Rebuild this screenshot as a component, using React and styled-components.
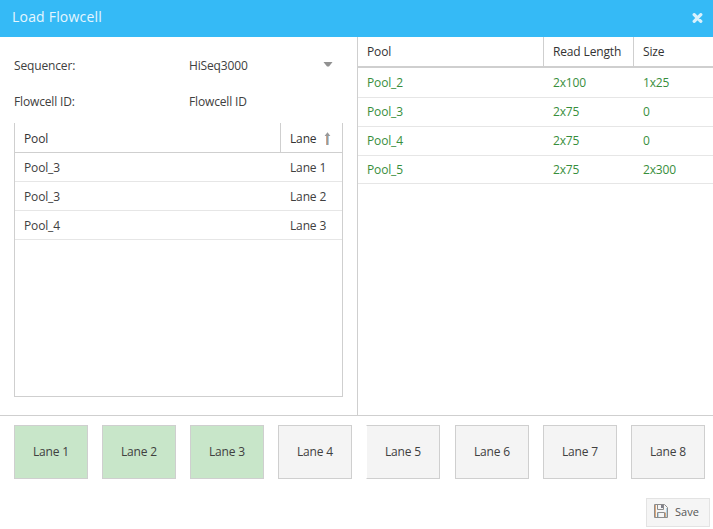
import React from 'react';
import styled, { createGlobalStyle } from 'styled-components';

const GlobalStyle = createGlobalStyle`
  * { box-sizing: border-box; }
  body { margin: 0; background: #fff; }
`;

const Window = styled.div`
  width: 713px;
  height: 529px;
  display: flex;
  flex-direction: column;
  overflow: hidden;
  background: #fff;
  color: #404040;
  font: 12px/18px "Open Sans", sans-serif;
  letter-spacing: -0.15px;
`;

const TitleBar = styled.header`
  flex: none;
  height: 37px;
  padding: 0 10px 3px 12px;
  display: flex;
  align-items: center;
  justify-content: space-between;
  background: #35baf6;
`;

const Title = styled.h1`
  margin: 0;
  color: #e5f6fe;
  font-size: 14px;
  font-weight: 400;
  letter-spacing: 0.2px;
`;

const CloseIcon = styled.svg`
  width: 11px;
  height: 10px;
  margin-top: 1px;
  display: block;
`;

const Body = styled.main`
  flex: none;
  height: 379px;
  display: flex;
  border-bottom: 1px solid #cfcfcf;
`;

const FormPanel = styled.section`
  width: 358px;
  padding: 11px 14px 0;
  border-right: 1px solid #cfcfcf;
`;

const Field = styled.div`
  width: 328px;
  height: 36px;
  padding-right: 9px;
  display: flex;
  align-items: center;
`;

const Label = styled.span`
  width: 175px;
`;

const Value = styled.span`
  flex: 1;
`;

const Caret = styled.svg`
  width: 10px;
  height: 6px;
  margin-top: -4px;
`;

const Grid = styled.div`
  display: flex;
  flex-direction: column;
`;

const LoadedGrid = styled(Grid)`
  width: 329px;
  height: 274px;
  margin-top: 3px;
  border: 1px solid #cfcfcf;
  border-top: 0;
`;

const PoolGrid = styled(Grid)`
  flex: 1;
`;

const HeaderRow = styled.div`
  display: grid;
  grid-template-columns: ${(p) => p.$columns};
  height: ${(p) => 29 + p.$rule}px;
  border-bottom: ${(p) => p.$rule}px solid #cfcfcf;
`;

const HeaderCell = styled.div`
  display: flex;
  align-items: center;
  padding-left: 9px;
  padding-top: ${(p) => p.$drop || 1}px;
  color: #333;
  white-space: nowrap;
  & + & { border-left: 1px solid #cfcfcf; }
`;

const Row = styled.div`
  display: grid;
  grid-template-columns: ${(p) => p.$columns};
  height: ${(p) => p.$height || 29}px;
  color: ${(p) => (p.$ready ? '#388e3c' : 'inherit')};
  border-bottom: 1px solid #e6e6e6;
`;

const Cell = styled.div`
  display: flex;
  align-items: center;
  padding-left: 9px;
  padding-top: ${(p) => p.$drop || 0}px;
  & + & { padding-left: 10px; }
`;

const SortIcon = styled.svg`
  width: 7px;
  height: 13px;
  margin: -2px 0 0 8px;
`;

const LaneBar = styled.section`
  flex: none;
  display: flex;
  gap: 14px;
  padding: 9px 0 0 14px;
`;

const Lane = styled.div`
  width: 74px;
  height: 54px;
  display: flex;
  align-items: center;
  justify-content: center;
  background: ${(p) => (p.$loaded ? '#c8e6c9' : '#f4f4f4')};
  border: 1px solid #cfcfcf;
  ${(p) => p.$open && 'border-left-color: #fff; margin-right: 1px;'}
`;

const Footer = styled.footer`
  display: flex;
  justify-content: flex-end;
  padding: 19px 3px 0 0;
`;

const SaveButton = styled.button`
  width: 64px;
  height: 29px;
  display: flex;
  align-items: center;
  gap: 7px;
  padding: 0 0 2px 7px;
  background: #f5f5f5;
  border: 1px solid #e3e3e3;
  color: #555;
  font: 11px/16px "Open Sans", sans-serif;
`;

const SaveIcon = styled.svg`
  width: 14px;
  height: 14px;
  margin-top: -1px;
`;

const loadedColumns = '265px 1fr';
const poolColumns = '185px 90px 1fr';

const loaded = [
  ['Pool_3', 'Lane 1'],
  ['Pool_3', 'Lane 2'],
  ['Pool_4', 'Lane 3'],
];

const pools = [
  ['Pool_2', '2x100', '1x25', 30],
  ['Pool_3', '2x75', '0', 29],
  ['Pool_4', '2x75', '0', 29],
  ['Pool_5', '2x75', '2x300', 28],
];

export default function App() {
  return (
    <Window>
      <GlobalStyle />
      <TitleBar>
        <Title>Load Flowcell</Title>
        <CloseIcon viewBox="0 0 11 10">
          <path d="M2.2 1.7 8.8 8.3M8.8 1.7 2.2 8.3" stroke="#d9f1fd" strokeWidth="3.3" strokeLinecap="round" />
        </CloseIcon>
      </TitleBar>
      <Body>
        <FormPanel>
          <Field>
            <Label>Sequencer:</Label>
            <Value>HiSeq3000</Value>
            <Caret viewBox="0 0 10 6"><path d="M.5 1h9L6 5.5H4z" fill="#919191" /></Caret>
          </Field>
          <Field>
            <Label>Flowcell ID:</Label>
            <Value>Flowcell ID</Value>
          </Field>
          <LoadedGrid>
            <HeaderRow $columns={loadedColumns} $rule={1}>
              <HeaderCell $drop={3}>Pool</HeaderCell>
              <HeaderCell $drop={3}>
                Lane
                <SortIcon viewBox="0 0 7 13">
                  <path d="M2.5 13V4H.6L3.5.2 6.4 4H4.5v9z" fill="#999" />
                  <path d="M2.5 4v9" stroke="#d3a586" />
                  <path d="M4.5 4v9" stroke="#a9cce3" />
                </SortIcon>
              </HeaderCell>
            </HeaderRow>
            {loaded.map(([pool, lane]) => (
              <Row key={lane} $columns={loadedColumns}>
                <Cell $drop={2}>{pool}</Cell>
                <Cell $drop={2}>{lane}</Cell>
              </Row>
            ))}
          </LoadedGrid>
        </FormPanel>
        <PoolGrid>
          <HeaderRow $columns={poolColumns} $rule={2}>
            <HeaderCell>Pool</HeaderCell>
            <HeaderCell>Read Length</HeaderCell>
            <HeaderCell>Size</HeaderCell>
          </HeaderRow>
          {pools.map(([pool, length, size, height]) => (
            <Row key={pool} $columns={poolColumns} $ready $height={height}>
              <Cell>{pool}</Cell>
              <Cell>{length}</Cell>
              <Cell>{size}</Cell>
            </Row>
          ))}
        </PoolGrid>
      </Body>
      <LaneBar>
        {[1, 2, 3, 4, 5, 6, 7, 8].map((n) => (
          <Lane key={n} $loaded={n <= 3} $open={n === 5}>{`Lane ${n}`}</Lane>
        ))}
      </LaneBar>
      <Footer>
        <SaveButton>
          <SaveIcon viewBox="0 0 14 14" fill="none" stroke="#8c8c8c" strokeWidth="1">
            <path d="M.5 13.5V.5h10l3 3v10z" />
            <path d="M3.5 1v4.5h6V1M3.5 13V8.5h7V13" />
            <path d="M7 1h2v3H7z" fill="#80808c" stroke="none" />
            <path d="M1.5 1v12M11.5 8.5V13" stroke="#dba678" />
            <path d="M12.5 4v9M4.5 9v4" stroke="#b5d5e8" />
          </SaveIcon>
          Save
        </SaveButton>
      </Footer>
    </Window>
  );
}
